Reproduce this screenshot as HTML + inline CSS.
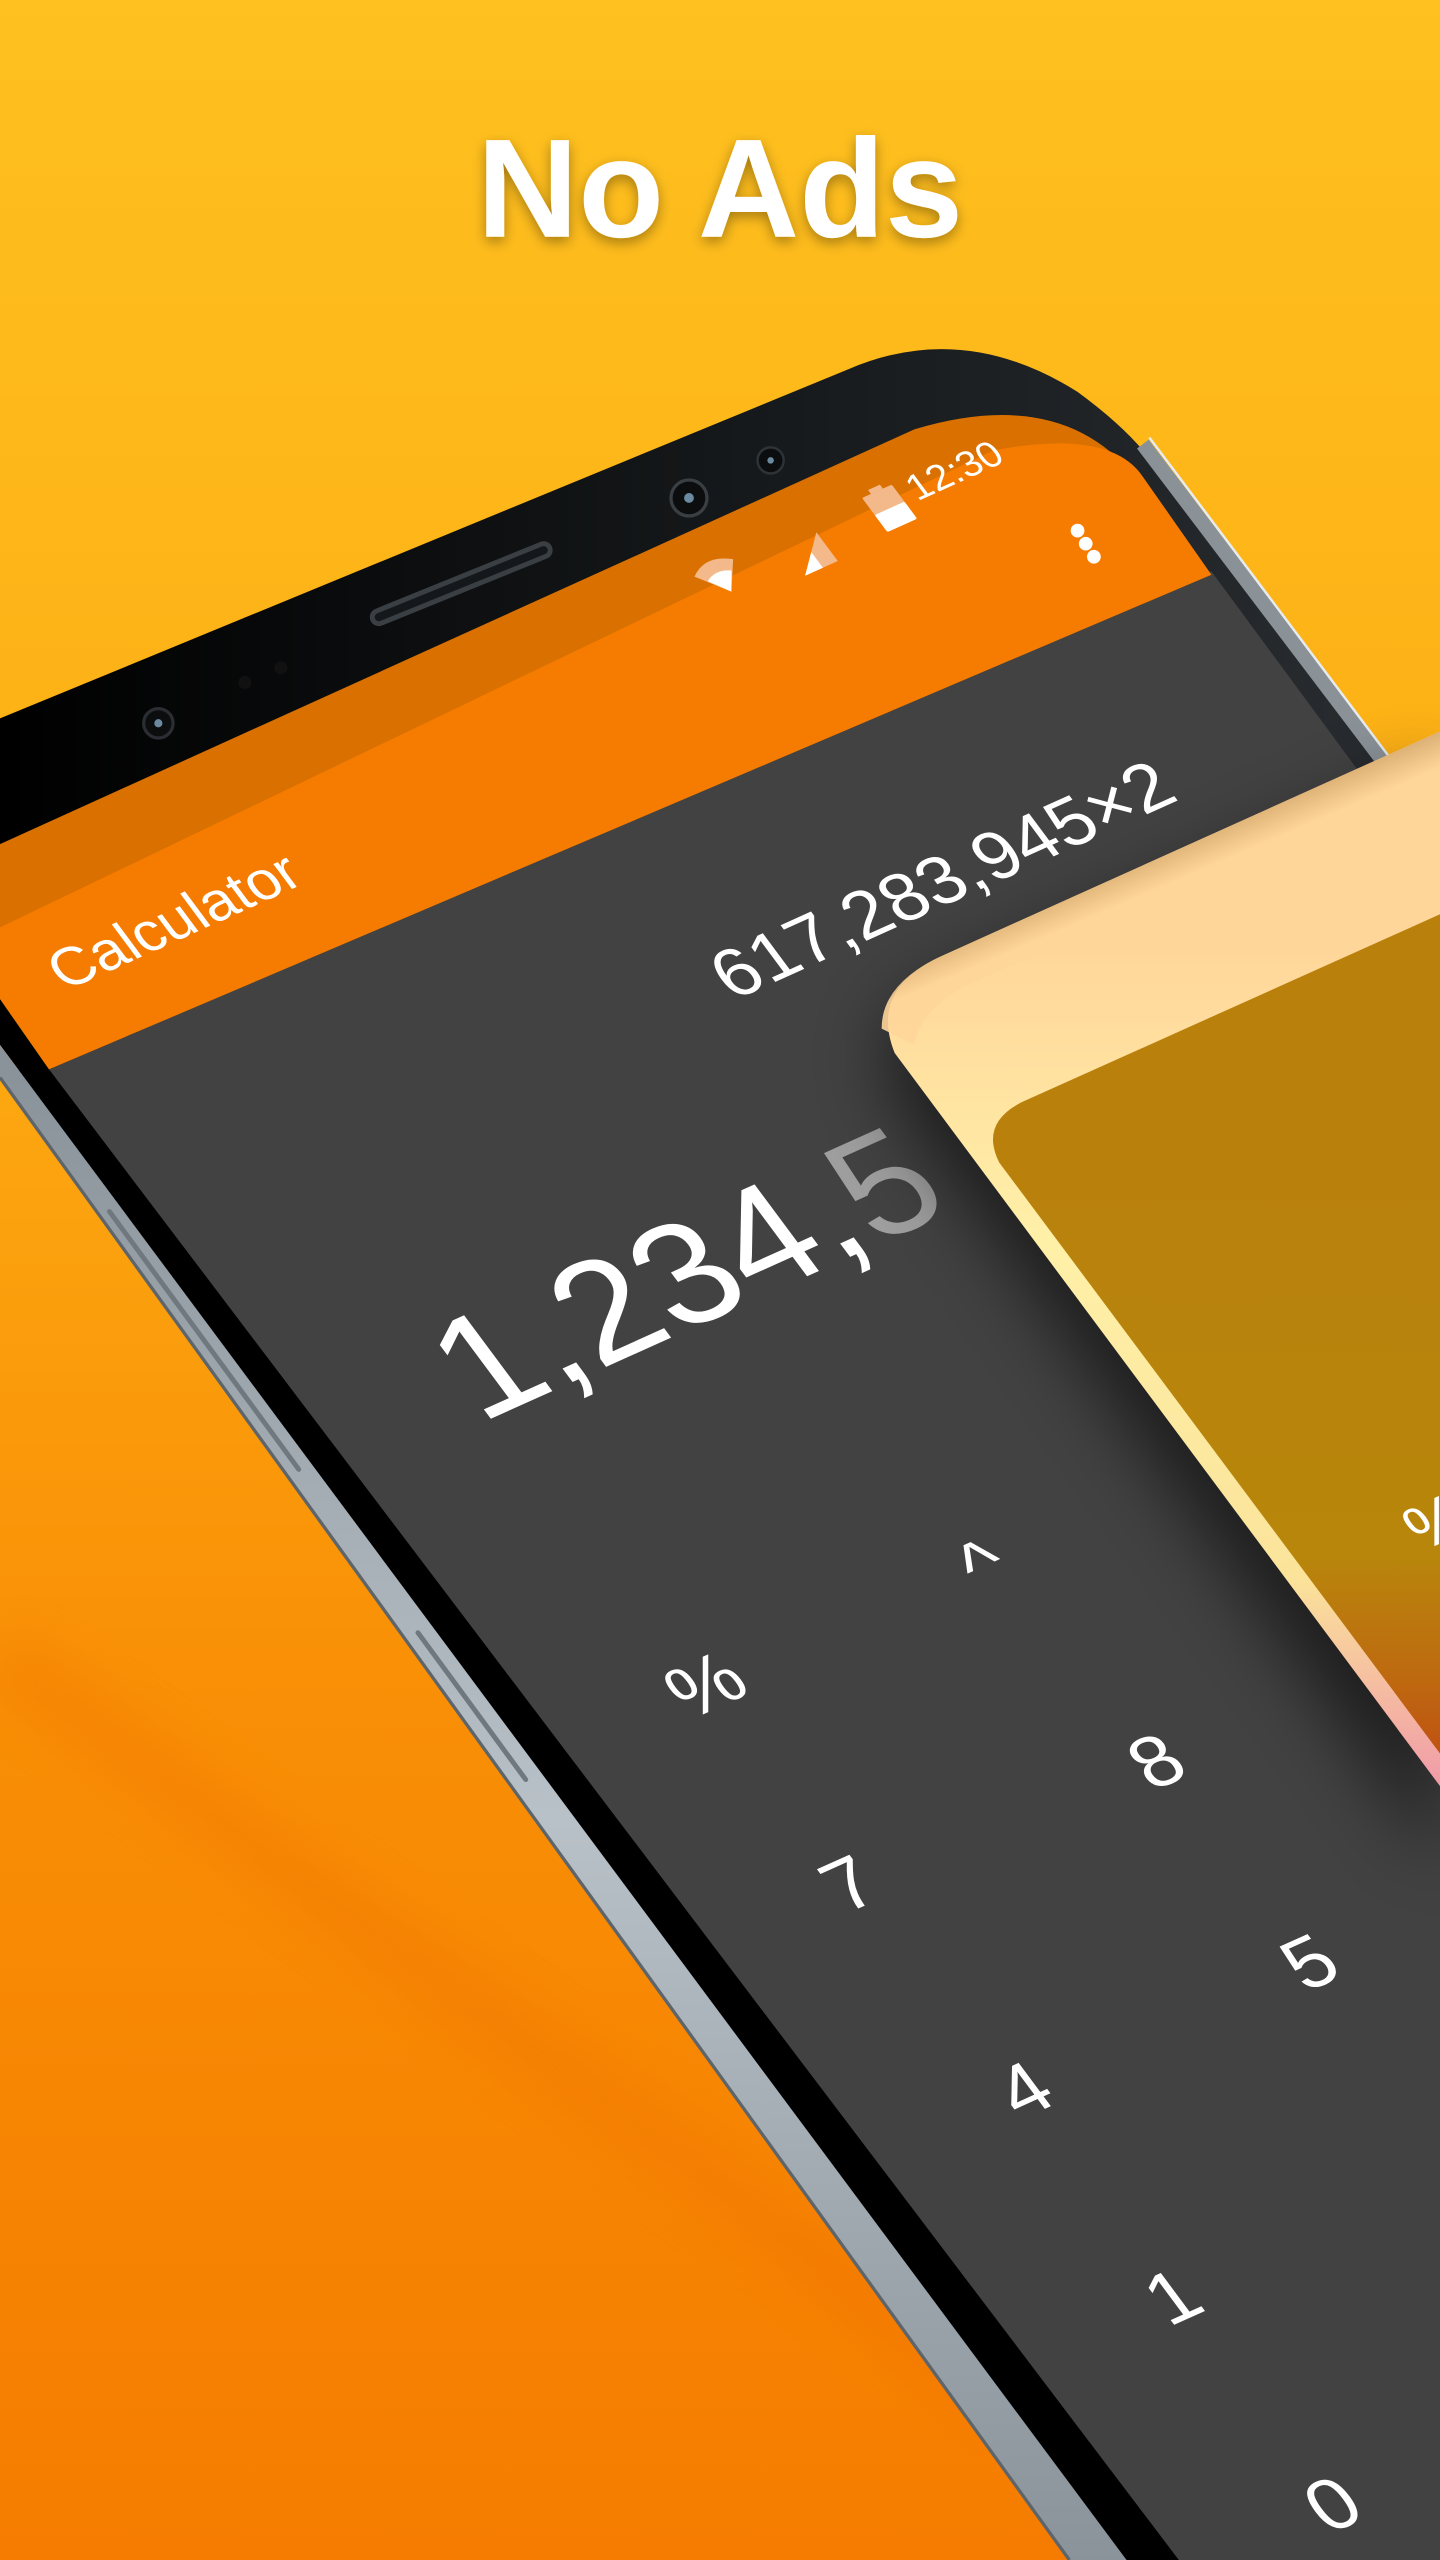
<!DOCTYPE html>
<html><head><meta charset="utf-8"><style>
html,body{margin:0;padding:0;width:1440px;height:2560px;overflow:hidden;background:#F8A010}
svg{display:block}
</style></head><body>
<svg width="1440" height="2560" viewBox="0 0 882 1568" xmlns="http://www.w3.org/2000/svg" font-family="Liberation Sans, sans-serif">
<defs>
<linearGradient id="bg" x1="0" y1="0" x2="0" y2="1">
<stop offset="0" stop-color="#FEC11F"/><stop offset="0.35" stop-color="#FDAE14"/><stop offset="0.65" stop-color="#F99006"/><stop offset="1" stop-color="#F57C00"/>
</linearGradient>
<linearGradient id="body" x1="0" y1="0" x2="1" y2="0">
<stop offset="0" stop-color="#000"/><stop offset="0.5" stop-color="#15181a"/><stop offset="1" stop-color="#2a2e32"/>
</linearGradient>
<linearGradient id="silver" x1="0" y1="660" x2="0" y2="1568" gradientUnits="userSpaceOnUse">
<stop offset="0" stop-color="#8a939a"/><stop offset="0.5" stop-color="#b9c1c8"/><stop offset="1" stop-color="#8a939a"/>
</linearGradient>
<linearGradient id="cardOut" x1="0" y1="580" x2="0" y2="1095" gradientUnits="userSpaceOnUse">
<stop offset="0" stop-color="#FFD69A"/><stop offset="0.35" stop-color="#FFF0A8"/><stop offset="0.75" stop-color="#FBE39A"/><stop offset="1" stop-color="#F09AA8"/>
</linearGradient>
<linearGradient id="cardIn" x1="0" y1="670" x2="0" y2="1075" gradientUnits="userSpaceOnUse">
<stop offset="0" stop-color="#B9800C"/><stop offset="0.7" stop-color="#B8860B"/><stop offset="0.88" stop-color="#BE6A10"/><stop offset="1" stop-color="#BF5212"/>
</linearGradient>
<linearGradient id="bevel" x1="690" y1="470" x2="720" y2="540" gradientUnits="userSpaceOnUse">
<stop offset="0" stop-color="#4a3010"/><stop offset="0.5" stop-color="#b98a50"/><stop offset="1" stop-color="#FFD69A"/>
</linearGradient>
<filter id="blur" x="-50%" y="-50%" width="200%" height="200%"><feGaussianBlur stdDeviation="22"/></filter>
<filter id="blur2" x="-50%" y="-50%" width="200%" height="200%"><feGaussianBlur stdDeviation="14"/></filter>
<filter id="ts" x="-20%" y="-20%" width="140%" height="160%"><feDropShadow dx="0" dy="3" stdDeviation="4" flood-color="#000" flood-opacity="0.35"/></filter>
</defs>

<rect width="882" height="1568" fill="url(#bg)"/>
<path d="M0,1015 Q320,1250 620,1470" stroke="#EC6A00" stroke-width="40" fill="none" opacity="0.25" filter="url(#blur2)"/>

<path d="M0,440 L520,226 Q590,196 660,240 Q690,262 705,282 L882,520 L882,1568 L655,1568 L0,660 Z" fill="url(#body)"/>
<path d="M700,272 L882,512" stroke="#8a9298" stroke-width="9" fill="none"/>
<path d="M704,268 L882,505" stroke="#e8ecef" stroke-width="1.5" fill="none"/>

<path d="M30,655 L742,350 L882,540 L882,1568 L722,1568 Z" fill="#424242"/>
<path d="M0,517 L560,263 Q650,236 695,292 L0,600 Z" fill="#D97000"/>
<path d="M0,568 L608,276 Q680,262 700,292 L742,352 L30,655 L0,655 Z" fill="#F57C00"/>

<path d="M0,612 L30,655 L722,1568 L690,1568 L0,640 Z" fill="#000"/>
<path d="M0,660 L655,1568 L690,1568 L0,640 Z" fill="url(#silver)"/>
<path d="M0,660 L655,1568" stroke="#5d656b" stroke-width="2" fill="none"/>
<path d="M67,742 L183,900" stroke="#6f787f" stroke-width="3" stroke-linecap="round"/>
<path d="M256,1000 L322,1090" stroke="#6f787f" stroke-width="3" stroke-linecap="round"/>

<path d="M232,378 L333,337" stroke="#3a3f44" stroke-width="11" stroke-linecap="round"/>
<path d="M232,378 L333,337" stroke="#15181a" stroke-width="5" stroke-linecap="round"/>
<circle cx="422" cy="305" r="11" fill="#0b0d0f" stroke="#3a3f44" stroke-width="2"/><circle cx="422" cy="305" r="3" fill="#6b8aa0"/>
<circle cx="472" cy="282" r="8" fill="#0b0d0f" stroke="#2e3337" stroke-width="1.5"/><circle cx="472" cy="282" r="2" fill="#6b8aa0"/>
<circle cx="97" cy="443" r="9" fill="#0b0d0f" stroke="#2a2e32" stroke-width="2"/><circle cx="97" cy="443" r="2.5" fill="#6b8aa0"/>
<circle cx="150" cy="418" r="4" fill="#111"/><circle cx="172" cy="409" r="4" fill="#111"/>

<g fill="#fff">
<text transform="matrix(0.91,-0.41,0.597,0.803,562,307)" font-size="24">12:30</text>
<g transform="matrix(0.91,-0.41,0.597,0.803,528,305)">
<rect x="0" y="0" width="20" height="26" fill="#F4B98A" rx="1"/><rect x="0" y="13" width="20" height="13" fill="#fff" rx="1"/><rect x="6" y="-3" width="8" height="3" fill="#F4B98A"/></g>
<g transform="matrix(0.91,-0.41,0.597,0.803,480,335)">
<path d="M0,22 L22,0 L22,22 Z" fill="#F4B98A"/><path d="M0,22 L12,10 L12,22 Z" fill="#fff"/></g>
<g transform="matrix(0.91,-0.41,0.597,0.803,423,350)">
<path d="M0,4 Q13,-6 26,4 L13,22 Z" fill="#F4B98A"/><path d="M5,10 Q13,5 21,10 L13,22 Z" fill="#fff"/></g>
<circle cx="660" cy="325" r="4.2"/><circle cx="665" cy="333" r="4.2"/><circle cx="670" cy="341" r="4.2"/>
</g>

<g fill="#fff">
<text transform="matrix(0.91,-0.41,0.597,0.803,40,607)" font-size="36">Calculator</text>
<text transform="matrix(0.91,-0.41,0.597,0.803,449,613)" font-size="45">617,283,945×2</text>
<text transform="matrix(0.91,-0.41,0.597,0.803,294,872)" font-size="96">1,234,<tspan fill="#9e9e9e">5</tspan></text>
<g font-size="48" text-anchor="middle">
<text transform="matrix(0.91,-0.41,0.597,0.803,612,972)">^</text>
<text transform="matrix(0.91,-0.41,0.597,0.803,442,1045)">%</text>
<text transform="matrix(0.91,-0.41,0.597,0.803,718,1092)">8</text>
<text transform="matrix(0.91,-0.41,0.597,0.803,530,1167)">7</text>
<text transform="matrix(0.91,-0.41,0.597,0.803,812,1215)">5</text>
<text transform="matrix(0.91,-0.41,0.597,0.803,637,1293)">4</text>
<text transform="matrix(0.91,-0.41,0.597,0.803,728,1420)">1</text>
<text transform="matrix(0.91,-0.41,0.597,0.803,826,1547)">0</text>
</g>
</g>

<path d="M882,470 L575,605 Q520,630 560,690 L882,1140 Z" fill="#000" opacity="0.55" filter="url(#blur)"/>
<path d="M882,448 L578,585 Q532,605 548,645 L882,1094 Z" fill="url(#cardOut)"/>
<path d="M882,448 L578,585 Q540,602 540,630 L560,640 Q565,615 600,600 L882,478 Z" fill="url(#bevel)" opacity="0.9"/>
<path d="M882,560 L626,675 Q600,688 612,712 L882,1074 Z" fill="url(#cardIn)"/>
<text transform="matrix(0.91,-0.41,0.597,0.803,872,950)" font-size="40" fill="#fff">%</text>

<text x="441" y="145" text-anchor="middle" font-size="86" font-weight="bold" fill="#fff" filter="url(#ts)">No Ads</text>
</svg>
</body></html>
